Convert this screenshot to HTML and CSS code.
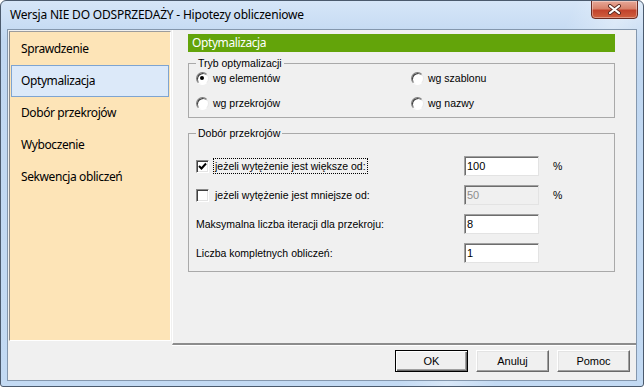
FILE: index.html
```html
<!DOCTYPE html>
<html lang="pl">
<head>
    <meta charset="UTF-8">
    <title>Hipotezy obliczeniowe</title>
    <link rel="stylesheet" href="styles.css">
</head>
<body>
    <div class="window">
        <!-- pasek tytułu -->
        <div class="titlebar">
            <span class="title">Wersja NIE DO ODSPRZEDAŻY - Hipotezy obliczeniowe</span>
            <div class="close-btn">
                <svg width="15" height="11" viewBox="0 0 15 11">
                    <path d="M3 2 L12 9 M12 2 L3 9" stroke="#5b2a22" stroke-width="4" stroke-linecap="round"/>
                    <path d="M3 2 L12 9 M12 2 L3 9" stroke="#fff" stroke-width="2.2" stroke-linecap="round"/>
                </svg>
            </div>
        </div>

        <div class="client">
            <div class="main">
                <!-- lista stron -->
                <ul class="nav">
                    <li>Sprawdzenie</li>
                    <li class="active">Optymalizacja</li>
                    <li>Dobór przekrojów</li>
                    <li>Wyboczenie</li>
                    <li>Sekwencja obliczeń</li>
                </ul>

                <div class="page">
                    <div class="page-header">Optymalizacja</div>

                    <fieldset class="group">
                        <legend>Tryb optymalizacji</legend>
                        <div class="radio-grid">
                            <label class="radio"><span class="radio-box checked"></span>wg elementów</label>
                            <label class="radio"><span class="radio-box"></span>wg szablonu</label>
                            <label class="radio"><span class="radio-box"></span>wg przekrojów</label>
                            <label class="radio"><span class="radio-box"></span>wg nazwy</label>
                        </div>
                    </fieldset>

                    <fieldset class="group group-sections">
                        <legend>Dobór przekrojów</legend>
                        <div class="form-rows">
                            <div class="form-row">
                                <label class="check">
                                    <span class="check-box">
                                        <svg width="9" height="9" viewBox="0 0 9 9"><path d="M1 4 L3.5 6.5 L8 1.5" stroke="#000" stroke-width="2" fill="none"/></svg>
                                    </span>
                                    <span class="check-text focused">jeżeli wytężenie jest większe od:</span>
                                </label>
                                <input type="text" class="field" value="100">
                                <span class="unit">%</span>
                            </div>
                            <div class="form-row">
                                <label class="check">
                                    <span class="check-box"></span>
                                    <span class="check-text">jeżeli wytężenie jest mniejsze od:</span>
                                </label>
                                <input type="text" class="field" value="50" disabled>
                                <span class="unit">%</span>
                            </div>
                            <div class="form-row">
                                <span class="row-label">Maksymalna liczba iteracji dla przekroju:</span>
                                <input type="text" class="field" value="8">
                            </div>
                            <div class="form-row">
                                <span class="row-label">Liczba kompletnych obliczeń:</span>
                                <input type="text" class="field" value="1">
                            </div>
                        </div>
                    </fieldset>
                </div>
            </div>

            <!-- przyciski -->
            <div class="footer">
                <button class="btn btn-default">OK</button>
                <button class="btn">Anuluj</button>
                <button class="btn">Pomoc</button>
            </div>
        </div>
    </div>
</body>
</html>
```

FILE: styles.css
```css
body {
    margin: 0;
    background: #ffffff;
    font-family: "Liberation Sans", Arial, sans-serif;
    font-size: 10.5px;
    color: #000;
}

.window {
    width: 644px;
    height: 387px;
    box-sizing: border-box;
    border: 1px solid #4b5a6d;
    border-radius: 6px 6px 3px 3px;
    background: linear-gradient(115deg, transparent 70%, rgba(255,255,255,0.35) 76%, transparent 82%),
                linear-gradient(#d6e6f8, #c0d7f1 40px, #c3daf3);
    display: flex;
    flex-direction: column;
    overflow: hidden;
}

.titlebar {
    height: 28px;
    display: flex;
    align-items: flex-start;
    justify-content: space-between;
}

.title {
    font-family: "Noto Sans", sans-serif;
    font-size: 12px;
    letter-spacing: -0.2px;
    line-height: 28px;
    padding-left: 9px;
    color: #000;
}

.close-btn {
    width: 45px;
    height: 17px;
    margin-right: 5px;
    margin-top: -1px;
    border: 1px solid #6b2b22;
    border-radius: 0 0 4px 4px;
    background: linear-gradient(#e7a898 0%, #d8826b 45%, #c2432c 55%, #d0603f 100%);
    box-shadow: inset 0 0 0 1px rgba(255,255,255,0.35);
    display: flex;
    align-items: center;
    justify-content: center;
}

.client {
    height: 352px;
    margin: 0 6px;
    border: 1px solid #8497ad;
    box-sizing: border-box;
    background: #f0f0f0;
    display: flex;
    flex-direction: column;
}

.main {
    height: 315px;
    display: flex;
}

.nav {
    list-style: none;
    margin: 1px 0 0 1px;
    padding: 1px 1px 0;
    width: 162px;
    height: 310px;
    box-sizing: border-box;
    background: #fde4b7;
    border: 1px solid;
    border-color: #9c9c9c #ffffff #ffffff #8a8a8a;
    font-family: "Noto Sans", sans-serif;
    font-size: 12px;
    letter-spacing: -0.4px;
}

.nav li {
    height: 32px;
    line-height: 32px;
    padding-left: 10px;
    box-sizing: border-box;
}

.nav li.active {
    background: #dce9f9;
    border: 1px solid #7ea4d1;
    line-height: 30px;
    padding-left: 9px;
}

.page {
    flex: 1;
    margin-left: 1px;
    padding: 4px 21px 0 15px;
    border-left: 1px solid #ffffff;
    border-bottom: 2px solid #8c8c8c;
    box-shadow: 0 1px 0 #ffffff;
}

.page-header {
    height: 18px;
    line-height: 18px;
    padding-left: 4px;
    background: #63a40a;
    color: #fff;
    font-family: "Noto Sans", sans-serif;
    font-size: 12px;
    letter-spacing: -0.4px;
}

.group {
    margin: 5px 0 0;
    padding: 0 7px 6px;
    border: 1px solid #a9a9a9;
    min-width: 0;
}

.group legend {
    padding: 0 2px;
    line-height: 13px;
    color: #000;
}

.radio-grid {
    display: grid;
    grid-template-columns: 215px 1fr;
    grid-auto-rows: 16px;
    row-gap: 9px;
}

.radio {
    display: flex;
    align-items: center;
    gap: 4px;
}

.radio-box {
    width: 13px;
    height: 13px;
    box-sizing: border-box;
    border-radius: 50%;
    border: 1px solid;
    border-color: #7d7d7d #e8e8e8 #ffffff #7d7d7d;
    box-shadow: inset 1px 1px 0 #404040;
    background: #fff;
    position: relative;
}

.radio-box.checked::after {
    content: "";
    position: absolute;
    left: 3px;
    top: 3px;
    width: 4px;
    height: 4px;
    border-radius: 50%;
    background: #000;
}

.group-sections {
    margin-top: 9px;
    padding-bottom: 8px;
}

.form-rows {
    padding-top: 16px;
    display: flex;
    flex-direction: column;
    gap: 9px;
}

.form-row {
    height: 20px;
    display: grid;
    grid-template-columns: 268px 75px auto;
    align-items: center;
}

.check {
    display: flex;
    align-items: center;
    gap: 4px;
}

.check-box {
    width: 13px;
    height: 13px;
    box-sizing: border-box;
    border: 1px solid;
    border-color: #8a8a8a #ffffff #ffffff #8a8a8a;
    box-shadow: inset 1px 1px 0 #404040, inset -1px -1px 0 #e3e3e3;
    background: #fff;
    display: flex;
    align-items: center;
    justify-content: center;
}

.check-text {
    padding: 0 1px;
    line-height: 14px;
    border: 1px solid transparent;
}

.check-text.focused {
    border: 1px dotted #000;
}

.field {
    height: 20px;
    width: 75px;
    box-sizing: border-box;
    margin: 0;
    padding: 0 2px;
    font-family: "Liberation Sans", Arial, sans-serif;
    font-size: 11px;
    color: #000;
    background: #fff;
    border: 1px solid;
    border-color: #a0a0a0 #e3e3e3 #e3e3e3 #a0a0a0;
    box-shadow: inset 1px 1px 0 #6d6d6d;
    outline: none;
}

.field:disabled {
    background: #f0f0f0;
    color: #8d8d8d;
}

.unit {
    margin-left: 14px;
}

.footer {
    flex: 1;
    display: flex;
    justify-content: flex-end;
    align-items: flex-start;
    gap: 8px;
    padding: 5px 6px 0 0;
}

.btn {
    width: 73px;
    height: 22px;
    margin: 0;
    padding: 0;
    font-family: "Liberation Sans", Arial, sans-serif;
    font-size: 11px;
    color: #000;
    background: #f0f0f0;
    border: 1px solid;
    border-color: #ffffff #696969 #696969 #ffffff;
    box-shadow: inset -1px -1px 0 #a0a0a0, inset 1px 1px 0 #e3e3e3;
}

.btn-default {
    border-color: #000;
    box-shadow: inset 1px 1px 0 #fff, inset -1px -1px 0 #696969, inset -2px -2px 0 #a0a0a0;
}
```
